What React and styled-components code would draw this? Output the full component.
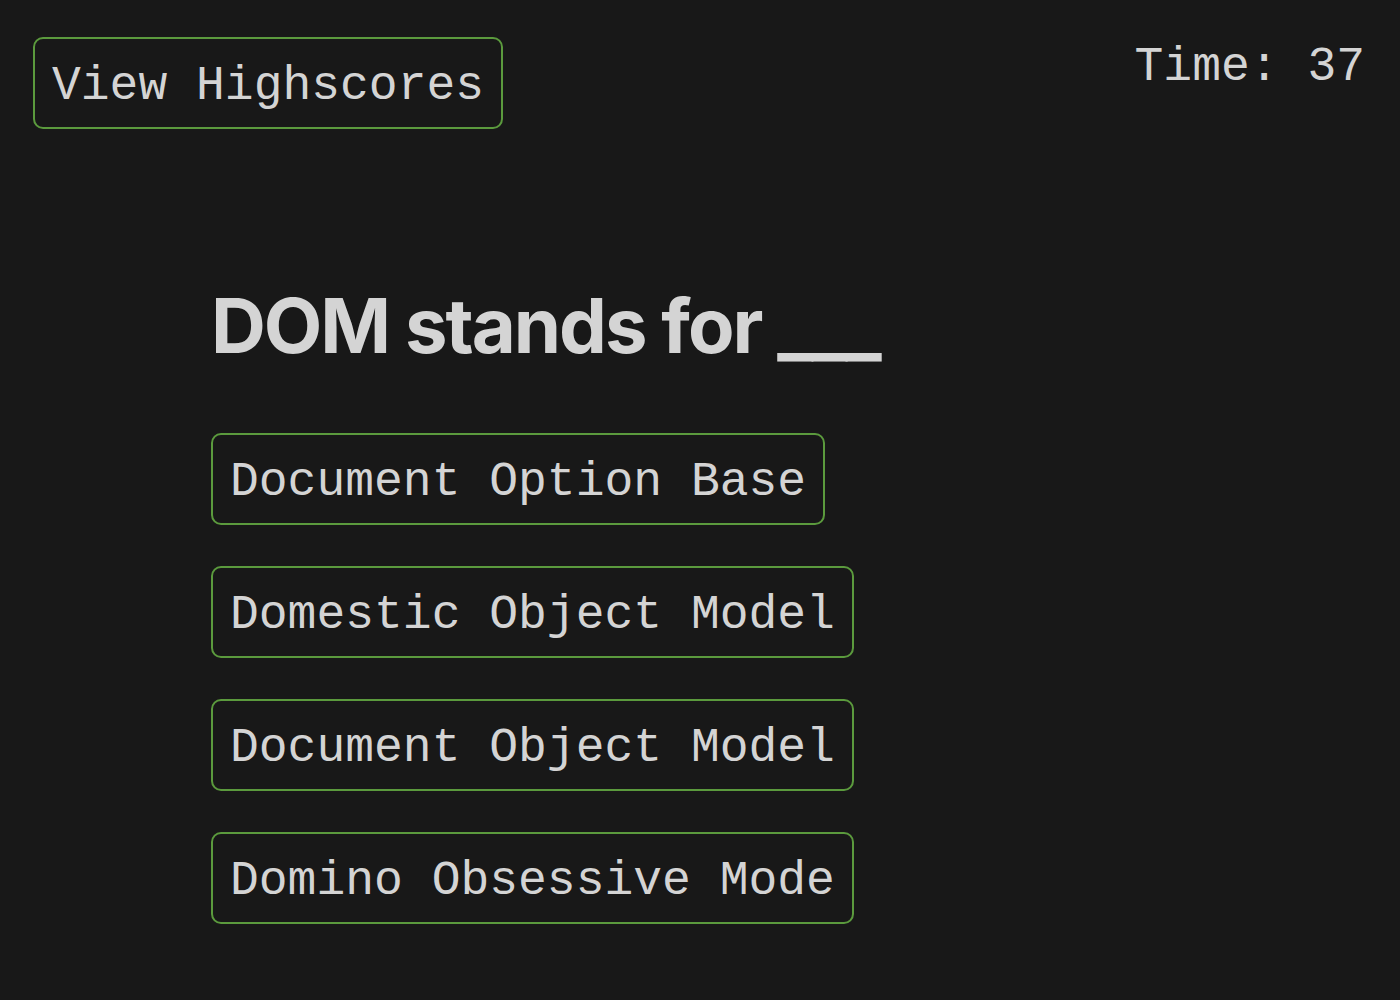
import React from "react";
import styled, { createGlobalStyle } from "styled-components";

const colors = {
  bg: "#181818",
  text: "#d4d4d4",
  border: "#5b9a3d",
};

const GlobalStyle = createGlobalStyle`
  html, body {
    margin: 0;
    padding: 0;
    background: ${colors.bg};
    color: ${colors.text};
    font-family: "Liberation Mono", "Courier New", monospace;
  }
`;

const Page = styled.div`
  min-height: 1000px;
  background: ${colors.bg};
`;

const TopBar = styled.header`
  display: flex;
  justify-content: space-between;
  align-items: flex-start;
  padding: 37px 35px 0 33px;
`;

const Button = styled.button`
  appearance: none;
  background: transparent;
  color: ${colors.text};
  font-family: "Liberation Mono", "Courier New", monospace;
  font-size: 48px;
  line-height: 55px;
  padding: 20px 17px 13px;
  border: 2px solid ${colors.border};
  border-radius: 10px;
  text-align: left;
  cursor: pointer;
  white-space: pre;
`;

const Timer = styled.div`
  font-size: 48px;
  line-height: 56px;
  padding-top: 2px;
  white-space: pre;
`;

const Quiz = styled.main`
  display: flex;
  flex-direction: column;
  align-items: flex-start;
  padding: 150px 0 0 211px;
`;

const Question = styled.h1`
  font-family: Inter, "Noto Sans", sans-serif;
  font-weight: 700;
  font-size: 76px;
  line-height: 92px;
  letter-spacing: -0.027em;
  margin: 0 0 62px;
`;

const Choices = styled.div`
  display: flex;
  flex-direction: column;
  align-items: flex-start;
  gap: 41px;
`;

const choices = [
  "Document Option Base",
  "Domestic Object Model",
  "Document Object Model",
  "Domino Obsessive Mode",
];

export default function App() {
  return (
    <Page>
      <GlobalStyle />
      <TopBar>
        <Button>View Highscores</Button>
        <Timer>Time: 37</Timer>
      </TopBar>
      <Quiz>
        <Question>DOM stands for ___</Question>
        <Choices>
          {choices.map((choice) => (
            <Button key={choice}>{choice}</Button>
          ))}
        </Choices>
      </Quiz>
    </Page>
  );
}
